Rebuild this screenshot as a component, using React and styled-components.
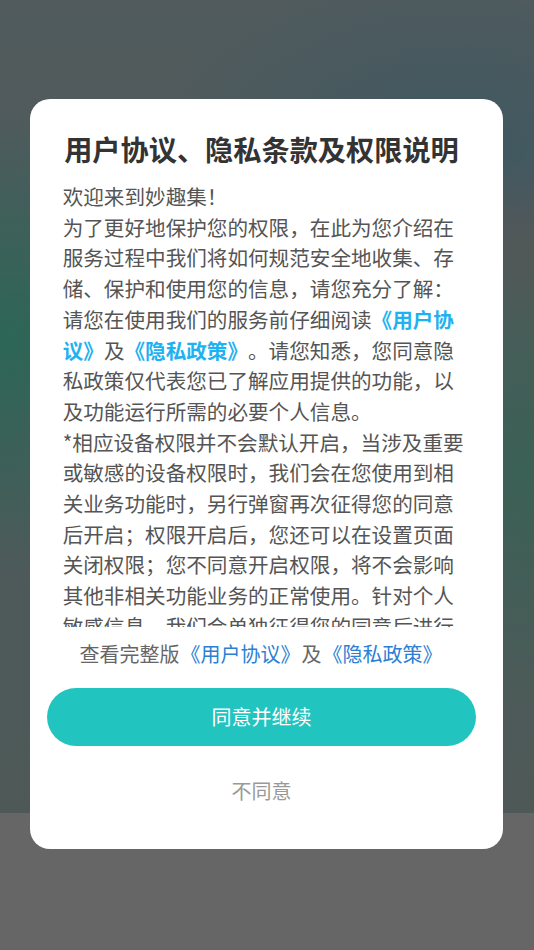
import React from "react";
import styled, { createGlobalStyle } from "styled-components";

const GlobalStyle = createGlobalStyle`
  * {
    box-sizing: border-box;
  }
  html, body {
    margin: 0;
    padding: 0;
    background: #666666;
  }
  body {
    font-family: "Noto Sans CJK SC", "Noto Sans", sans-serif;
    text-spacing-trim: space-all;
    overflow: hidden;
  }
`;

// 원본 화면의 줄바꿈을 그대로 따름
const bodyLines = [
  ["欢迎来到妙趣集！"],
  ["为了更好地保护您的权限，在此为您介绍在"],
  ["服务过程中我们将如何规范安全地收集、存"],
  ["储、保护和使用您的信息，请您充分了解："],
  ["请您在使用我们的服务前仔细阅读", { link: "《用户协" }],
  [{ link: "议》" }, "及", { link: "《隐私政策》" }, "。请您知悉，您同意隐"],
  ["私政策仅代表您已了解应用提供的功能，以"],
  ["及功能运行所需的必要个人信息。"],
  ["*相应设备权限并不会默认开启，当涉及重要"],
  ["或敏感的设备权限时，我们会在您使用到相"],
  ["关业务功能时，另行弹窗再次征得您的同意"],
  ["后开启；权限开启后，您还可以在设置页面"],
  ["关闭权限；您不同意开启权限，将不会影响"],
  ["其他非相关功能业务的正常使用。针对个人"],
  ["敏感信息，我们会单独征得您的同意后进行"],
  ["处理。"],
];

const App = () => {
  return (
    <>
      <GlobalStyle />
      <Page>
        <Scene />
        <BottomBar />
        <Overlay>
          <Dialog>
            <Title>用户协议、隐私条款及权限说明</Title>
            <Body>
              {bodyLines.map((parts, i) => (
                <Line key={i}>
                  {parts.map((part, j) =>
                    typeof part === "string" ? (
                      <React.Fragment key={j}>{part}</React.Fragment>
                    ) : (
                      <BodyLink key={j}>{part.link}</BodyLink>
                    )
                  )}
                </Line>
              ))}
            </Body>
            <Footer>
              查看完整版<FooterLink>《用户协议》</FooterLink>及
              <FooterLink>《隐私政策》</FooterLink>
            </Footer>
            <AgreeButton>同意并继续</AgreeButton>
            <RejectButton>不同意</RejectButton>
          </Dialog>
        </Overlay>
      </Page>
    </>
  );
};

export default App;

const Page = styled.div`
  position: relative;
  width: 534px;
  height: 950px;
  display: flex;
  flex-direction: column;
  overflow: hidden;
`;

const Scene = styled.div`
  height: 813px;
  background:
    radial-gradient(ellipse 55% 28% at 0% 42%, rgba(38, 104, 86, 0.85), transparent),
    radial-gradient(ellipse 45% 30% at 100% 58%, rgba(50, 100, 82, 0.7), transparent),
    radial-gradient(ellipse 35% 12% at 100% 32%, rgba(95, 85, 80, 0.5), transparent),
    radial-gradient(ellipse 55% 22% at 85% 18%, rgba(52, 86, 100, 0.6), transparent),
    linear-gradient(180deg, #515b5d 0%, #4d5a5b 60%, #4e5957 100%);
`;

const BottomBar = styled.div`
  flex: 1;
  background: #666666;
`;

const Overlay = styled.div`
  position: absolute;
  inset: 0;
  padding: 99px 31px 0 30px;
`;

const Dialog = styled.div`
  width: 473px;
  height: 750px;
  background: #ffffff;
  border-radius: 20px;
  padding: 30px 27px 0 17px;
  display: flex;
  flex-direction: column;
  align-items: stretch;
`;

const Title = styled.div`
  text-align: center;
  font-size: 28.2px;
  line-height: 40px;
  font-weight: 700;
  color: #333333;
  white-space: nowrap;
`;

const Body = styled.div`
  margin-top: 12px;
  height: 446px;
  overflow: hidden;
  padding: 0 0 0 15.7px;
  font-size: 20.6px;
  line-height: 30.7px;
  color: #555555;
`;

const Line = styled.div`
  white-space: nowrap;
`;

const BodyLink = styled.span`
  color: #1fb2f0;
  font-weight: 700;
`;

const Footer = styled.div`
  margin-top: 12px;
  text-align: center;
  font-size: 20px;
  line-height: 30px;
  color: #666666;
  white-space: nowrap;
`;

const FooterLink = styled.span`
  color: #2b80d4;
  padding: 0 1px;
`;

const AgreeButton = styled.div`
  margin-top: 19px;
  height: 57.5px;
  border-radius: 29px;
  background: #22c4c0;
  color: #ffffff;
  font-size: 20px;
  display: flex;
  align-items: center;
  justify-content: center;
`;

const RejectButton = styled.div`
  margin-top: 30px;
  text-align: center;
  font-size: 20px;
  line-height: 30px;
  color: #999999;
`;
